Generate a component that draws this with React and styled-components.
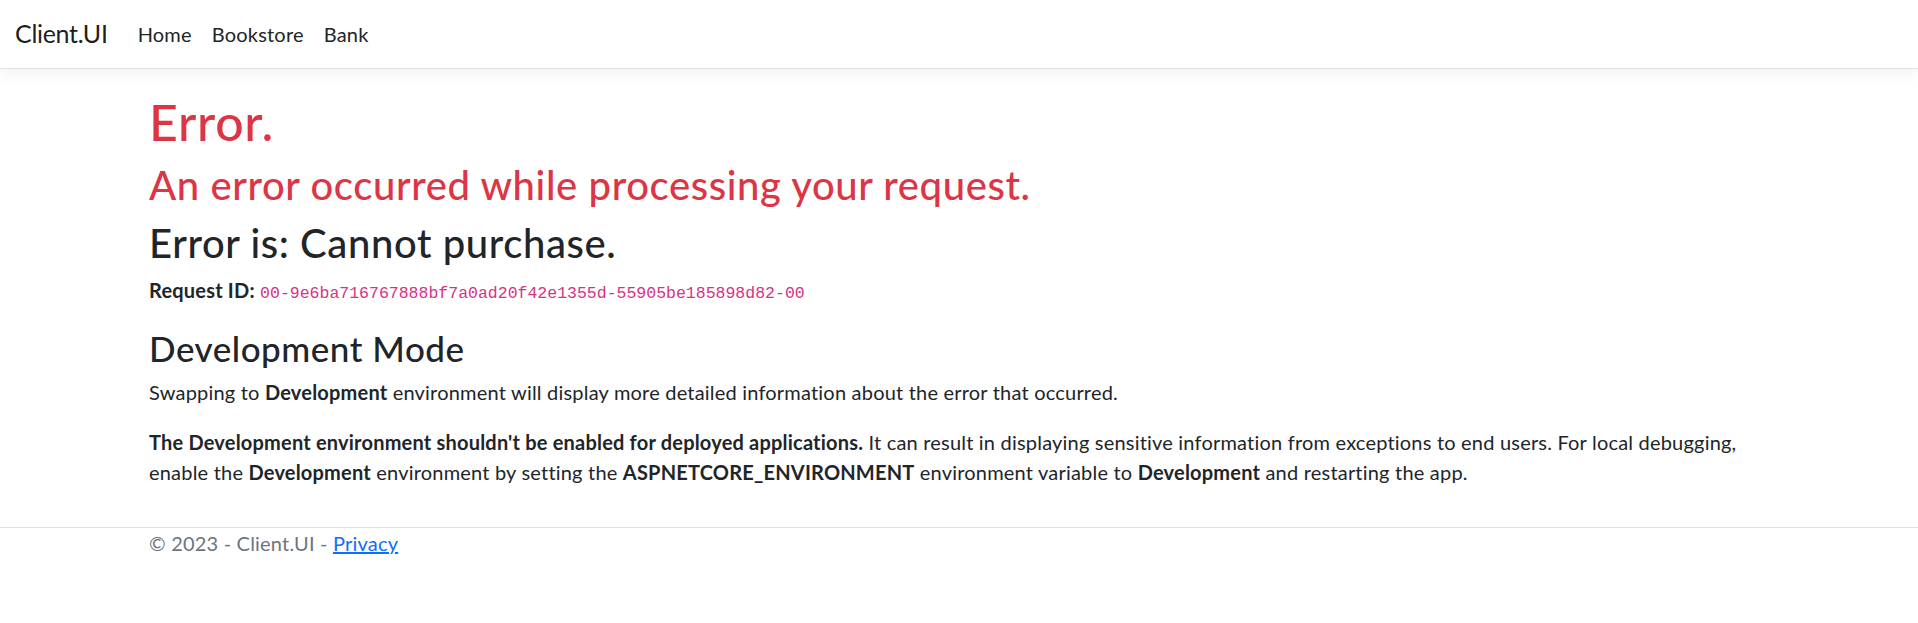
import React from 'react'
import styled, { createGlobalStyle } from 'styled-components'

const GlobalStyle = createGlobalStyle`
  * { box-sizing: border-box; }
  body {
    margin: 0;
    background: #fff;
    color: #212529;
    font-family: Lato, "Noto Sans", "Liberation Sans", sans-serif;
    font-size: 20px;
    line-height: 1.5;
    letter-spacing: 0.2px;
  }
`

const Navbar = styled.nav`
  display: flex;
  align-items: center;
  padding: 9px 15px;
  background: #fff;
  border-bottom: 1px solid #dee2e6;
  box-shadow: 0 5px 15px rgba(0, 0, 0, 0.05);
  margin-bottom: 20px;
`

const Brand = styled.a`
  font-size: 25px;
  line-height: 37.5px;
  padding: 6px 0;
  margin-right: 20px;
  color: rgba(0, 0, 0, 0.9);
  text-decoration: none;
  letter-spacing: -0.3px;
`

const NavList = styled.ul`
  display: flex;
  list-style: none;
  margin: 0;
  padding: 0;
`

const NavLink = styled.a`
  display: block;
  padding: 10px;
  line-height: 30px;
  color: #212529;
  text-decoration: none;
`

const Container = styled.div`
  width: 100%;
  max-width: 1650px;
  margin: 0 auto;
  padding: 0 15px;
`

const Main = styled.main`
  padding-bottom: 20px;
`

// glyphs sit a bit high in Lato, so nudge them down without changing the flow
const Heading = styled.h1`
  margin: 0 0 calc(10px - 0.05em);
  padding-top: 0.05em;
  font-weight: 500;
  line-height: 1.2;
  letter-spacing: 0.015em;
  font-size: ${p => p.$size}px;
  color: ${p => (p.$danger ? '#dc3545' : '#212529')};
`

const Para = styled.p`
  margin: 0 0 20px;
`

const Code = styled.code`
  font-family: "Liberation Mono", "DejaVu Sans Mono", monospace;
  font-size: 16.5px;
  line-height: 0;
  letter-spacing: 0;
  color: #d63384;
`

const Footer = styled.footer`
  border-top: 1px solid #dee2e6;
  color: #6c757d;
  line-height: 30px;
`

const FooterLink = styled.a`
  color: #0d6efd;
  text-decoration: underline;
`

export default function App() {
  return (
    <>
      <GlobalStyle />
      <header>
        <Navbar>
          <Brand href="#">Client.UI</Brand>
          <NavList>
            <li><NavLink href="#">Home</NavLink></li>
            <li><NavLink href="#">Bookstore</NavLink></li>
            <li><NavLink href="#">Bank</NavLink></li>
          </NavList>
        </Navbar>
      </header>
      <Container>
        <Main>
          <Heading $size={50} $danger>Error.</Heading>
          <Heading as="h2" $size={40} $danger>An error occurred while processing your request.</Heading>
          <Heading as="h2" $size={40}>Error is: Cannot purchase.</Heading>
          <Para>
            <strong>Request ID:</strong> <Code>00-9e6ba716767888bf7a0ad20f42e1355d-55905be185898d82-00</Code>
          </Para>
          <Heading as="h3" $size={35}>Development Mode</Heading>
          <Para>
            Swapping to <strong>Development</strong> environment will display more detailed information about the error that occurred.
          </Para>
          <Para>
            <strong>The Development environment shouldn't be enabled for deployed applications.</strong>{' '}
            It can result in displaying sensitive information from exceptions to end users.
            For local debugging, enable the <strong>Development</strong> environment by setting the{' '}
            <strong>ASPNETCORE_ENVIRONMENT</strong> environment variable to <strong>Development</strong>{' '}
            and restarting the app.
          </Para>
        </Main>
      </Container>
      <Footer>
        <Container>
          &copy; 2023 - Client.UI - <FooterLink href="#">Privacy</FooterLink>
        </Container>
      </Footer>
    </>
  )
}
